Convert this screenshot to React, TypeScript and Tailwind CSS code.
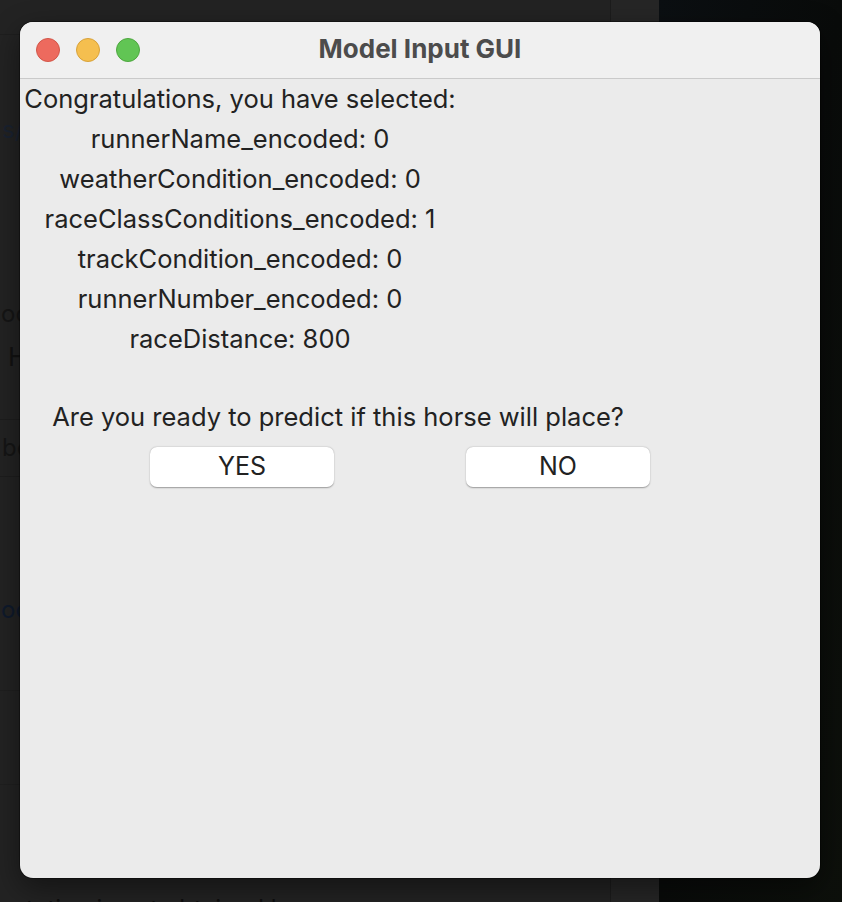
import React from "react";

const lines = [
  "runnerName_encoded: 0",
  "weatherCondition_encoded: 0",
  "raceClassConditions_encoded: 1",
  "trackCondition_encoded: 0",
  "runnerNumber_encoded: 0",
  "raceDistance: 800",
];

export default function App() {
  return (
    <div
      className="relative w-[842px] h-[902px] overflow-hidden bg-[#232323] flex"
      style={{ fontFamily: "Inter, 'Noto Sans', sans-serif" }}
    >
      {/* background: editor page */}
      <div className="w-[611px] h-full flex flex-col border-r border-[#1c1c1c] text-[#141a24]">
        <div className="h-[35px] border-b border-[#1e1e1e] shrink-0" />
        <div className="h-[80px] shrink-0" />
        <div className="h-[30px] text-[24px] leading-[30px] pl-[2px] text-[#1a2230] shrink-0">s/</div>
        <div className="h-[154px] shrink-0" />
        <div className="h-[30px] text-[24px] leading-[30px] pl-[1px] text-[#151515] shrink-0">oc</div>
        <div className="h-[56px] text-[26px] leading-[56px] pl-[8px] text-[#121212] shrink-0">H</div>
        <div className="h-[35px] border-b border-[#1d1d1d] shrink-0" />
        <div className="h-[57px] flex items-center text-[24px] pl-[2px] text-[#151515] border-b border-[#1d1d1d] shrink-0">be</div>
        <div className="h-[118px] shrink-0" />
        <div className="h-[30px] text-[24px] leading-[30px] pl-[1px] text-[#0f1a2c] shrink-0">oc</div>
        <div className="h-[66px] border-b border-[#1f1f1f] shrink-0" />
        <div className="h-[94px] border-b border-[#1f1f1f] shrink-0" />
        <div className="flex-1 flex items-end pl-[26px]">
          <div className="text-[24px] leading-[24px] -mb-[19px] text-[#0e0e0e] whitespace-nowrap">
            tation is not obtained by
          </div>
        </div>
      </div>
      <div className="w-[48px] h-full bg-[#262626] flex flex-col">
        <div className="h-[35px] border-b border-[#1e1e1e]" />
      </div>
      <div className="flex-1 h-full bg-gradient-to-br from-[#0b0f12] via-[#090b0a] to-[#0d100b]" />

      {/* window */}
      <div className="absolute left-[20px] top-[22px] w-[800px] h-[856px] rounded-[13px] overflow-hidden bg-[#ebebeb] shadow-[0_0_0_1px_rgba(0,0,0,0.35),0_10px_30px_rgba(0,0,0,0.45)] flex flex-col">
        <div className="relative h-[57px] shrink-0 bg-[#f0f0f0] border-b border-[#cacaca] flex items-center justify-center">
          <div className="absolute left-[16px] top-[16px] flex gap-[16px]">
            <div className="w-[24px] h-[24px] rounded-full bg-[#ed6a5e] border border-[#d25649]" />
            <div className="w-[24px] h-[24px] rounded-full bg-[#f5bf4f] border border-[#d8a23a]" />
            <div className="w-[24px] h-[24px] rounded-full bg-[#61c554] border border-[#4ea73f]" />
          </div>
          <div className="text-[26px] font-bold text-[#4c4c4c] -mt-[3px]">Model Input GUI</div>
        </div>
        <div className="grid grid-cols-[440px_196px] text-[25.5px] text-[#222222]">
          <div className="h-[40px] flex items-center justify-center whitespace-nowrap">
            Congratulations, you have selected:
          </div>
          <div />
          {lines.map((l) => (
            <React.Fragment key={l}>
              <div className="h-[40px] flex items-center justify-center whitespace-nowrap">{l}</div>
              <div />
            </React.Fragment>
          ))}
          <div className="h-[38px] col-span-2" />
          <div className="h-[40px] col-span-2 flex items-center justify-center whitespace-nowrap">
            Are you ready to predict if this horse will place?
          </div>
          <div className="flex justify-center pt-[10px]">
            <button className="ml-[4px] w-[184px] h-[40px] bg-white rounded-[7px] shadow-[0_0.5px_1.5px_rgba(0,0,0,0.35)] text-[25px] text-[#222222]">
              YES
            </button>
          </div>
          <div className="flex justify-center pt-[10px]">
            <button className="w-[184px] h-[40px] bg-white rounded-[7px] shadow-[0_0.5px_1.5px_rgba(0,0,0,0.35)] text-[25px] text-[#222222]">
              NO
            </button>
          </div>
        </div>
      </div>
    </div>
  );
}
